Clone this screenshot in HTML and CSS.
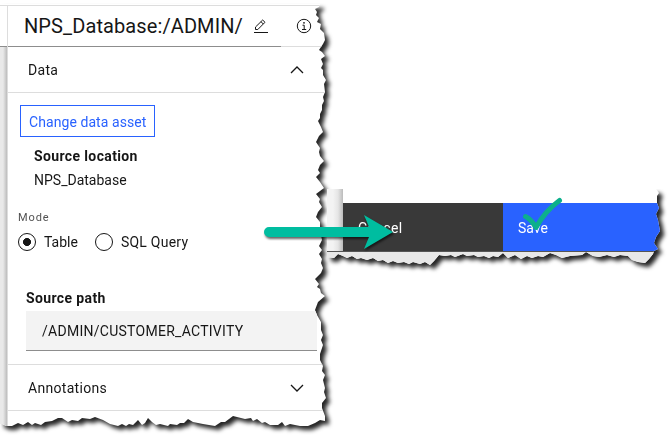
FILE: index.html
```
<!DOCTYPE html>
<html lang="en">
<head>
<meta charset="utf-8">
<title>NPS_Database asset</title>
<link rel="stylesheet" href="styles.css">
</head>
<body>
<main class="stage">
  <div class="torn torn-panel">
    <section class="sheet panel">
      <div class="gutter"></div>
      <div class="content">
        <header class="title-row">
          <h1 class="title"><span class="t-title">NPS_Database:/ADMIN/</span></h1>
          <svg class="edit" viewBox="0 0 16 16"><path d="M1 14.5h14M2.500 11.500v-2.500L9.700 2l2.300 2.300L4.800 11.500zM8 3.700l2.300 2.300" /></svg>
          <svg class="info" viewBox="0 0 16 16"><circle cx="8" cy="8" r="6.7"/><path d="M6.5 7.2H8.2V11.5M6 11.5h4.2"/><circle class="dot" cx="8" cy="4.8" r=".9"/></svg>
        </header>
        <div class="section-row"><span class="t-data">Data</span>
          <svg class="chevron" viewBox="0 0 14 8"><path d="M1 7l6-6 6 6"/></svg></div>
        <div class="details">
          <button class="change"><span class="t-change">Change data asset</span></button>
          <div class="location"><strong class="t-loc">Source location</strong><span class="t-nps">NPS_Database</span></div>
          <div class="mode"><span class="t-mode">Mode</span></div>
          <div class="radios">
            <span class="radio checked"></span><span class="t-table">Table</span>
            <span class="radio"></span><span class="t-sql">SQL Query</span>
          </div>
          <strong class="path-label"><span class="t-path">Source path</span></strong>
          <div class="path-field"><span class="t-field">/ADMIN/CUSTOMER_ACTIVITY</span></div>
        </div>
        <div class="section-row last"><span class="t-ann">Annotations</span>
          <svg class="chevron" viewBox="0 0 14 8"><path d="M1 1l6 6 6-6"/></svg></div>
      </div>
    </section>
  </div>
  <div class="torn torn-actions">
    <section class="sheet actions">
      <div class="strip"></div>
      <div class="buttons"><button class="cancel"><span class="t-cancel">Cancel</span></button><button class="save"><span class="t-save">Save</span></button></div>
      <div class="under"></div>
    </section>
  </div>
  <svg class="marks" viewBox="0 0 671 437">
    <path class="arrow" d="M269 227H369L364 215L393 232L364 249L369 237H269A5 5 0 0 1 269 227Z"/>
    <path class="check" d="M525.5 216.5Q531 219 536 227.500Q545 211 559.500 200.500"/>
  </svg>
</main>
</body>
</html>
```
FILE: styles.css
```
* { box-sizing: border-box; }
body { margin: 0; background: #fff; font: 14px/18px Roboto, "Open Sans", sans-serif; color: #161616; }
button { font: inherit; border: 0; padding: 0; text-align: left; }
span, strong { white-space: nowrap; }
svg { display: block; fill: none; stroke: #161616; }
.stage { position: relative; width: 671px; height: 437px; overflow: hidden; display: flex; }
.torn { filter: drop-shadow(4px 4px 2px rgba(0,0,0,.85)); }
.torn-panel { width: 327px; height: 437px; flex: none; }
.sheet { background: #fff; }
.panel {
  width: 327px; height: 437px; display: flex; padding-top: 5px;
  clip-path: polygon(0 4px,320px 4px,319px 7px,315px 9px,317px 12px,316px 15px,319px 18px,317px 22px,321px 24px,320px 29px,324px 33px,325px 40px,323px 44px,319px 50px,322px 52px,325px 56px,321px 59px,323px 64px,321px 68px,323px 70px,323px 75px,326px 80px,324px 84px,325px 92px,323px 97px,324px 101px,322px 105px,322px 110px,320px 114px,320px 118px,318px 121px,321px 127px,323px 132px,319px 136px,316px 142px,320px 148px,319px 152px,320px 156px,324px 161px,320px 165px,318px 170px,320px 173px,316px 177px,320px 182px,324px 188px,320px 191px,316px 194px,320px 199px,319px 202px,322px 207px,318px 212px,316px 217px,320px 222px,320px 230px,322px 240px,319px 246px,322px 250px,319px 254px,322px 259px,321px 263px,323px 268px,321px 273px,315px 279px,319px 284px,317px 287px,320px 289px,321px 293px,325px 296px,318px 302px,315px 310px,317px 315px,321px 322px,321px 330px,323px 335px,321px 340px,323px 345px,320px 354px,320px 360px,323px 366px,322px 371px,325px 375px,323px 380px,325px 388px,324px 392px,326px 398px,322px 403px,322px 408px,325px 416px,325px 421px,320px 420px,315px 423px,308px 426px,300px 426px,290px 424px,285px 426px,282px 422px,278px 425px,270px 425px,265px 422px,262px 423px,257px 419px,253px 421px,251px 418px,245px 419px,233px 416px,225px 422px,221px 422px,215px 426px,203px 424px,193px 422px,188px 419px,184px 423px,180px 423px,177px 425px,170px 424px,168px 426px,160px 424px,156px 425px,152px 422px,148px 418px,145px 423px,142px 425px,138px 420px,133px 425px,129px 424px,126px 426px,122px 424px,118px 426px,110px 424px,103px 420px,95px 417px,90px 419px,82px 418px,78px 421px,72px 420px,68px 422px,62px 418px,58px 418px,52px 421px,45px 422px,41px 425px,35px 423px,32px 425px,28px 422px,23px 425px,18px 423px,12px 426px,6px 426px,2px 424px,0 424px);
}
.gutter { width: 7px; flex: none; border-top: 1px solid #ddd; background: linear-gradient(#8d8d8d,#8d8d8d) 0 40px/7px 1px no-repeat, linear-gradient(#fff,#fff) 0 0/7px 41px no-repeat, linear-gradient(90deg,#e9e9e9 0 3px,#bcbcbc); }
.content { flex: 1; min-width: 0; border-left: 1px solid #ddd; }
.title-row { height: 42px; border-top: 1px solid #ddd; display: flex; align-items: center; padding: 0 0 1px 16px; background: linear-gradient(#8d8d8d,#8d8d8d) 0 100%/273px 1px no-repeat, linear-gradient(#ddd,#ddd) 0 100%/100% 1px no-repeat; }
.title { width: 229px; margin: 0; font-size: 20px; font-weight: 400; line-height: 26px; }
.edit { width: 16px; height: 16px; }
.info { width: 16px; height: 16px; margin-left: 27px; }
.info .dot { fill: #161616; stroke: none; }
.section-row { height: 46px; border-bottom: 1px solid #ddd; display: flex; align-items: center; justify-content: space-between; padding: 0 23px 0 20px; }
.chevron { width: 14px; height: 8px; stroke-width: 1.3; }
.details { height: 272px; border-bottom: 1px solid #ddd; padding-top: 12px; }
.change { display: flex; align-items: center; width: 135px; height: 32px; margin-left: 12px; padding: 2px 0 0 8px; border: 1px solid #2962ff; background: #fff; color: #2962ff; }
.location { margin: 7px 0 0 26px; height: 45px; display: flex; flex-direction: column; line-height: 24px; }
.mode { margin: 21px 0 0 10px; font-size: 11px; line-height: 16px; color: #525252; }
.radios { margin: 6px 0 0 10px; height: 20px; display: flex; align-items: center; }
.radio { width: 18px; height: 18px; flex: none; border: 1px solid #161616; border-radius: 50%; margin-right: 8px; }
.radio.checked { background: radial-gradient(circle,#161616 0 3.7px,transparent 4.3px); }
.t-table + .radio { margin-left: 17px; }
.path-label { display: block; margin: 37px 0 0 18px; line-height: 18px; }
.path-field { margin: 4px 0 0 18px; width: 291px; height: 40px; padding-left: 16px; background: #f3f3f3; border-bottom: 1px solid #8d8d8d; line-height: 40px; }
.torn-actions { margin-top: 189px; height: 80px; clip-path: inset(0 -20px -20px 0); }
.actions {
  width: 340px; height: 80px; display: grid; grid-template: 62px 18px / 16px 324px;
  clip-path: polygon(0 0,329px 0,332px 4px,330px 7px,330px 14px,332px 19px,329px 25px,331px 31px,333px 42px,329px 48px,327px 54px,331px 60px,327px 62px,326px 65px,322px 70px,318px 74px,311px 73px,305px 71px,301px 67px,293px 66px,287px 68px,280px 66px,272px 68px,266px 67px,259px 63px,255px 66px,243px 67px,235px 69px,229px 66px,223px 64px,216px 68px,211px 67px,205px 69px,200px 67px,194px 70px,188px 66px,181px 69px,176px 64px,171px 68px,166px 67px,162px 69px,157px 67px,151px 68px,147px 66px,140px 67px,136px 65px,128px 68px,124px 66px,118px 67px,112px 66px,107px 72px,103px 76px,98px 73px,93px 75px,86px 73px,82px 75px,77px 73px,71px 74px,66px 72px,61px 74px,56px 71px,51px 72px,46px 69px,40px 71px,34px 69px,30px 70px,25px 67px,20px 69px,16px 67px,11px 65px,7px 69px,0 68px);
}
.strip { background: linear-gradient(90deg,#f3f3f3 0 6px,#e5e5e5 11px,#bbb); }
.buttons { display: flex; padding-top: 14px; }
.cancel, .save { height: 48px; padding: 2px 0 0 15px; color: #fff; display: flex; align-items: center; }
.cancel { width: 160px; background: #393939; }
.save { flex: 1; background: #2962ff; }
.under { grid-column: 1 / 3; background: #e8e8e8; border-top: 1px solid #555; }
.marks { position: absolute; left: 0; top: 0; width: 671px; height: 437px; pointer-events: none; }
.arrow { fill: #00bda0; stroke: none; filter: drop-shadow(1px 2px 1px rgba(0,0,0,.6)); }
.check { stroke: #0cb08c; stroke-width: 5; stroke-linecap: round; stroke-linejoin: round; }
.t-title { letter-spacing: .1px; }
.t-data { letter-spacing: .3px; }
.t-change { letter-spacing: .07px; }
.t-loc { letter-spacing: .37px; }
.t-mode { letter-spacing: .9px; }
.t-sql { letter-spacing: .25px; }
.t-field { letter-spacing: .27px; }
.t-path { letter-spacing: .37px; }
.t-ann { letter-spacing: .3px; }
.t-cancel { letter-spacing: .3px; }
```
